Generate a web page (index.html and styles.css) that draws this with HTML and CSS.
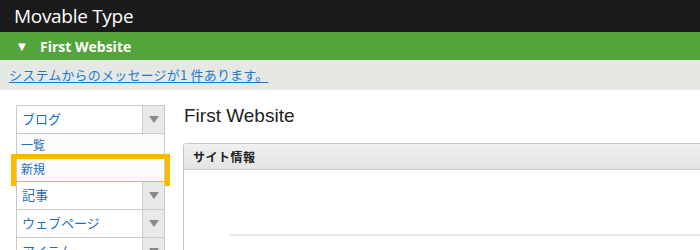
FILE: index.html
```html
<!DOCTYPE html>
<html lang="ja">
<head>
<meta charset="utf-8">
<link rel="stylesheet" href="styles.css">
</head>
<body>
<div class="topbar"><span class="brand">Movable Type</span></div>
<div class="sitebar"><span class="caret">&#9660;</span><span class="sitename">First Website</span></div>
<div class="msgbar"><a class="msg" href="#">システムからのメッセージが1 件あります。</a></div>
<div class="main">
  <nav class="sidebar">
    <div class="menu">
      <div class="item"><span class="label">ブログ</span><span class="arrow"></span></div>
      <div class="sub"><span class="label">一覧</span></div>
      <div class="sub current"><span class="label">新規</span><span class="highlight"></span></div>
      <div class="item"><span class="label">記事</span><span class="arrow"></span></div>
      <div class="item"><span class="label">ウェブページ</span><span class="arrow"></span></div>
      <div class="item"><span class="label">アイテム</span><span class="arrow"></span></div>
    </div>
  </nav>
  <section class="content">
    <h1 class="title">First Website</h1>
    <div class="panel">
      <div class="panel-head">サイト情報</div>
      <div class="panel-body"><div class="rule"></div></div>
    </div>
  </section>
</div>
</body>
</html>
```
FILE: styles.css
```css
html, body {
  margin: 0;
  padding: 0;
  overflow: hidden;
  width: 700px;
  height: 250px;
  background: #fff;
  font-family: "Noto Sans CJK JP", "Noto Sans", sans-serif;
}
.topbar {
  height: 32px;
  background: #1b1b1b;
  padding-left: 14px;
  display: flex;
  align-items: center;
}
.brand {
  color: #fff;
  font-family: "Open Sans", sans-serif;
  font-size: 19px;
  letter-spacing: -0.3px;
  line-height: 32px;
}
.sitebar {
  height: 28px;
  background: #53a43a;
  display: flex;
  align-items: center;
  padding-left: 18px;
  color: #fff;
}
.caret {
  font-size: 10px;
  width: 22px;
  font-family: "DejaVu Sans", sans-serif;
}
.sitename {
  font-family: "Open Sans", sans-serif;
  font-weight: 700;
  font-size: 14px;
}
.msgbar {
  height: 30px;
  background: #e6e8e3;
  padding-left: 9px;
  display: flex;
  align-items: center;
}
.msg {
  color: #1b7acf;
  font-size: 13px;
  line-height: 16px;
  text-decoration: underline;
  text-underline-offset: 2px;
  letter-spacing: 0.2px;
}
.main {
  display: flex;
}
.sidebar {
  width: 149px;
  padding: 15px 0 0 16px;
  flex: none;
}
.menu {
  border-top: 1px solid #c8cacc;
}
.item, .sub {
  position: relative;
  display: flex;
  border: 1px solid #c8cacc;
  border-top: none;
  background: #fff;
}
.item {
  height: 27px;
}
.sub {
  height: 23px;
  background: #fbfbfb;
}
.label {
  flex: 1;
  color: #1a6fc0;
  font-size: 13px;
  display: flex;
  align-items: center;
  padding: 0 0 3px 5px;
}
.sub .label {
  font-size: 12px;
  padding: 0 0 2px 4px;
}
.arrow {
  width: 21px;
  border-left: 1px solid #c8cacc;
  background: #e9e9e9;
  display: flex;
  align-items: center;
  justify-content: center;
}
.arrow::after {
  content: "";
  border-left: 5px solid transparent;
  border-right: 5px solid transparent;
  border-top: 7px solid #8a8a8a;
}
.highlight {
  position: absolute;
  left: -6px;
  right: -6px;
  top: -4px;
  bottom: -5px;
  border: 5px solid #fbb900;
}
.content {
  flex: none;
  width: 600px;
  padding-left: 18px;
}
.title {
  margin: 13px 0 0 1px;
  font-family: "Liberation Sans", Arial, sans-serif;
  font-weight: normal;
  font-size: 19px;
  line-height: 25px;
  color: #222;
}
.panel {
  margin-top: 15px;
  border: 1px solid #c4c6c8;
  border-radius: 3px 0 0 0;
  height: 200px;
}
.panel-head {
  height: 25px;
  background: linear-gradient(#f0f0f0, #e4e4e4);
  border-bottom: 1px solid #c4c6c8;
  display: flex;
  align-items: center;
  padding-left: 9px;
  font-size: 12px;
  font-weight: 700;
  letter-spacing: 0.5px;
  color: #222;
}
.panel-body {
  padding: 64px 0 0 45px;
}
.rule {
  height: 2px;
  background: #e8e8e8;
}
```
